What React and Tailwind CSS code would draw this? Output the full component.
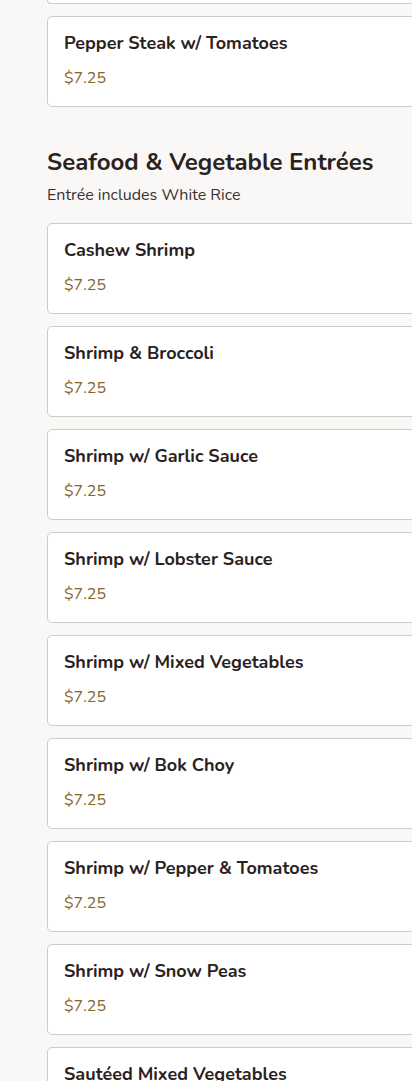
// Menu section — seafood & vegetable entrées (mobile)

const font = { fontFamily: '"Nunito", "Lato", "Open Sans", sans-serif' };

const SEAFOOD = [
  "Cashew Shrimp",
  "Shrimp & Broccoli",
  "Shrimp w/ Garlic Sauce",
  "Shrimp w/ Lobster Sauce",
  "Shrimp w/ Mixed Vegetables",
  "Shrimp w/ Bok Choy",
  "Shrimp w/ Pepper & Tomatoes",
  "Shrimp w/ Snow Peas",
  "Sautéed Mixed Vegetables",
];

function ItemCard({ name, price }) {
  return (
    <div className="w-[420px] shrink-0 rounded-[5px] border border-[#cfcbc7] bg-white px-4 pt-[14px] pb-4">
      <h3 className="text-[18px] leading-6 font-bold text-[#2a2220]">{name}</h3>
      <p className="mt-[11px] text-[16px] leading-6 text-[#85652c]">{price}</p>
    </div>
  );
}

export default function App() {
  return (
    <div className="min-h-[1081px] w-[412px] overflow-hidden bg-[#f9f8f6]" style={font}>
      <div className="flex flex-col gap-[12px] pl-[47px]">
        {/* tail of the previous card, scrolled off the top */}
        <div className="h-[4px] w-[420px] rounded-b-[5px] border-x border-b border-[#cfcbc7] bg-white" />
        <ItemCard name="Pepper Steak w/ Tomatoes" price="$7.25" />
      </div>

      <section className="mt-[39px] pl-[47px]">
        <h2 className="text-[24px] leading-8 font-bold text-[#2a2220]">Seafood &amp; Vegetable Entrées</h2>
        <p className="mt-[5px] text-[16px] leading-6 text-[#3a3230]">Entrée includes White Rice</p>
        <div className="mt-[16px] flex flex-col gap-[12px]">
          {SEAFOOD.map((n) => (
            <ItemCard key={n} name={n} price="$7.25" />
          ))}
        </div>
      </section>
    </div>
  );
}
